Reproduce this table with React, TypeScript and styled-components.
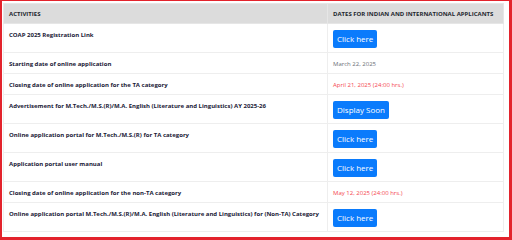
import React from "react";
import styled, { createGlobalStyle } from "styled-components";

const GlobalStyle = createGlobalStyle`
  html, body {
    margin: 0;
    padding: 0;
    background: #ffffff;
  }
  body {
    font-family: "Open Sans", "Liberation Sans", sans-serif;
  }
`;

const Frame = styled.div`
  width: 512px;
  height: 240px;
  box-sizing: border-box;
  border-style: solid;
  border-color: #e3232c;
  border-width: 1px 3px 3px 2px;
  padding: 2px 6px 0 1px;
  background: #ffffff;
  overflow: hidden;
`;

const Table = styled.table`
  width: 500px;
  border-collapse: collapse;
  table-layout: fixed;
`;

const HeadCell = styled.th`
  height: 20px;
  box-sizing: border-box;
  padding: 0 5px;
  background: #dcdcdc;
  color: #23272e;
  font-size: 6px;
  line-height: 10px;
  font-weight: 700;
  text-align: left;
  text-transform: uppercase;
  vertical-align: middle;
  border: 1px solid #e6e6e6;
`;

const Cell = styled.td<{ $tall?: boolean }>`
  height: ${(p) => (p.$tall ? 29 : 21)}px;
  box-sizing: border-box;
  padding: 6px 5px 0;
  vertical-align: top;
  border: 1px solid #eeeeee;
  font-size: 6px;
  line-height: 10px;
`;

const Activity = styled.span`
  color: #1a2036;
  font-size: 6px;
  font-weight: 700;
`;

const DateText = styled.span<{ $urgent?: boolean }>`
  color: ${(p) => (p.$urgent ? "#f4474f" : "#6b6f76")};
  font-size: 6px;
`;

const LinkButton = styled.a`
  display: inline-flex;
  align-items: center;
  justify-content: center;
  height: 18px;
  padding: 0 4px;
  box-sizing: border-box;
  background: #0a7bfc;
  border-radius: 2px;
  color: #ffffff;
  font-size: 8px;
  line-height: 1;
  text-decoration: none;
  vertical-align: top;
`;

type Row = {
  activity: string;
  date?: string;
  urgent?: boolean;
  button?: string;
};

const rows: Row[] = [
  { activity: "COAP 2025 Registration Link", button: "Click here" },
  { activity: "Starting date of online application", date: "March 22, 2025" },
  {
    activity: "Closing date of online application for the TA category",
    date: "April 21, 2025 (24:00 hrs.)",
    urgent: true,
  },
  {
    activity:
      "Advertisement for M.Tech./M.S.(R)/M.A. English (Literature and Linguistics) AY 2025-26",
    button: "Display Soon",
  },
  {
    activity: "Online application portal for M.Tech./M.S.(R) for TA category",
    button: "Click here",
  },
  { activity: "Application portal user manual", button: "Click here" },
  {
    activity: "Closing date of online application for the non-TA category",
    date: "May 12, 2025 (24:00 hrs.)",
    urgent: true,
  },
  {
    activity:
      "Online application portal M.Tech./M.S.(R)/M.A. English (Literature and Linguistics) for (Non-TA) Category",
    button: "Click here",
  },
];

const App: React.FC = () => {
  return (
    <>
      <GlobalStyle />
      <Frame>
        <Table>
          <colgroup>
            <col style={{ width: 324 }} />
            <col style={{ width: 176 }} />
          </colgroup>
          <thead>
            <tr>
              <HeadCell>Activities</HeadCell>
              <HeadCell>Dates for Indian and International Applicants</HeadCell>
            </tr>
          </thead>
          <tbody>
            {rows.map((row) => (
              <tr key={row.activity}>
                <Cell $tall={!!row.button}>
                  <Activity>{row.activity}</Activity>
                </Cell>
                <Cell $tall={!!row.button}>
                  {row.button ? (
                    <LinkButton href="#">{row.button}</LinkButton>
                  ) : (
                    <DateText $urgent={row.urgent}>{row.date}</DateText>
                  )}
                </Cell>
              </tr>
            ))}
          </tbody>
        </Table>
      </Frame>
    </>
  );
};

export default App;
